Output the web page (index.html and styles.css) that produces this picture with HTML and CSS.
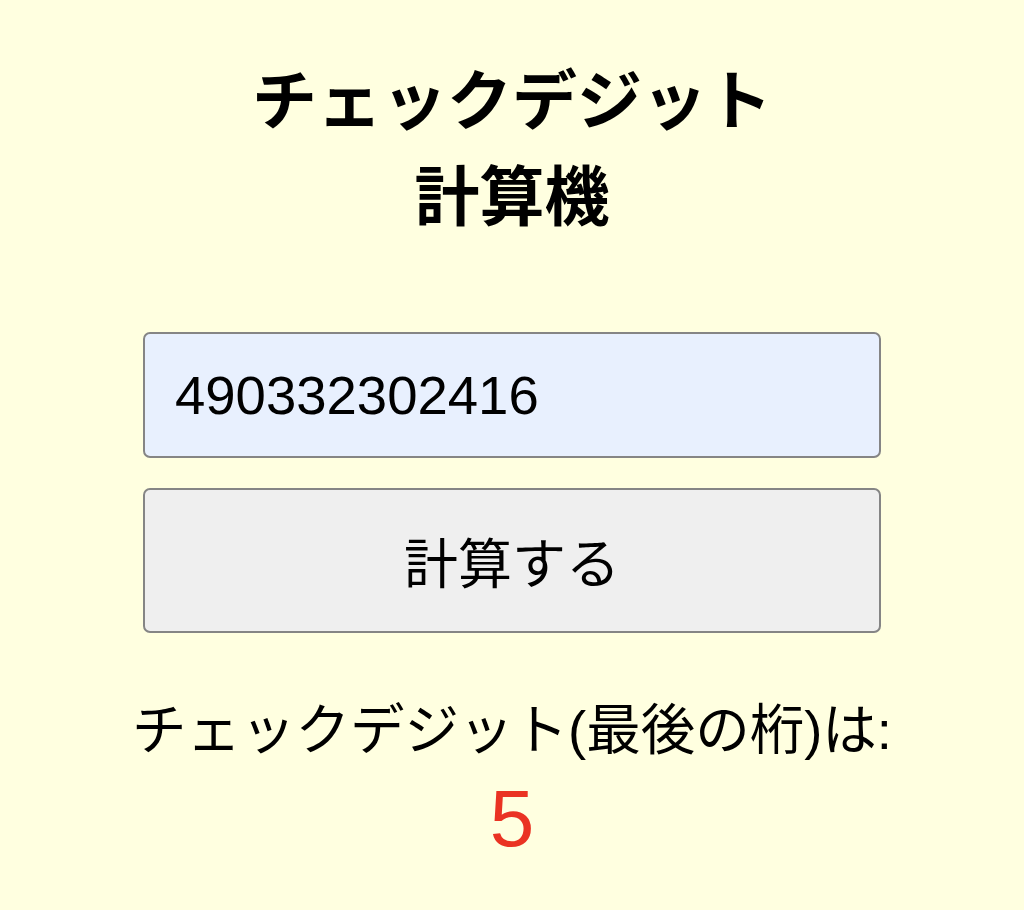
FILE: index.html
```html
<!DOCTYPE html>
<html lang="ja">
<head>
<meta charset="utf-8">
<title>チェックデジット計算機</title>
<link rel="stylesheet" href="styles.css">
</head>
<body>
<main class="app">
  <h1 class="title">チェックデジット<br>計算機</h1>
  <input class="code-input" type="text" value="490332302416">
  <button class="calc-btn" type="button">計算する</button>
  <p class="result-label">チェックデジット(最後の桁)は:</p>
  <p class="result-value">5</p>
</main>
</body>
</html>
```

FILE: styles.css
```css
html, body {
  margin: 0;
  padding: 0;
  background: #ffffe0;
}
body {
  font-family: "Liberation Sans", "Noto Sans CJK JP", sans-serif;
  color: #000;
}
.app {
  width: 738px;
  margin: 0 auto;
  padding-top: 54px;
  display: flex;
  flex-direction: column;
  align-items: stretch;
  text-align: center;
}
.title {
  margin: 0 -60px 86px;
  font-size: 65px;
  line-height: 96px;
  font-weight: bold;
}
.code-input {
  box-sizing: border-box;
  height: 126px;
  width: 100%;
  margin: 0;
  padding: 0 30px;
  border: 2px solid #858585;
  border-radius: 7px;
  background: #e8f0fe;
  font-family: "Liberation Sans", "Noto Sans CJK JP", sans-serif;
  font-size: 54.5px;
  color: #000;
  outline: none;
}
.calc-btn {
  box-sizing: border-box;
  height: 145px;
  width: 100%;
  margin: 30px 0 0;
  border: 2px solid #858585;
  border-radius: 7px;
  background: #efefef;
  font-family: "Liberation Sans", "Noto Sans CJK JP", sans-serif;
  font-size: 54px;
  color: #000;
}
.result-label {
  margin: 61px -80px 0;
  font-size: 54.5px;
  line-height: 74px;
}
.result-value {
  margin: 10px 0 0;
  font-size: 80px;
  line-height: 82px;
  color: #ea3323;
}
```
